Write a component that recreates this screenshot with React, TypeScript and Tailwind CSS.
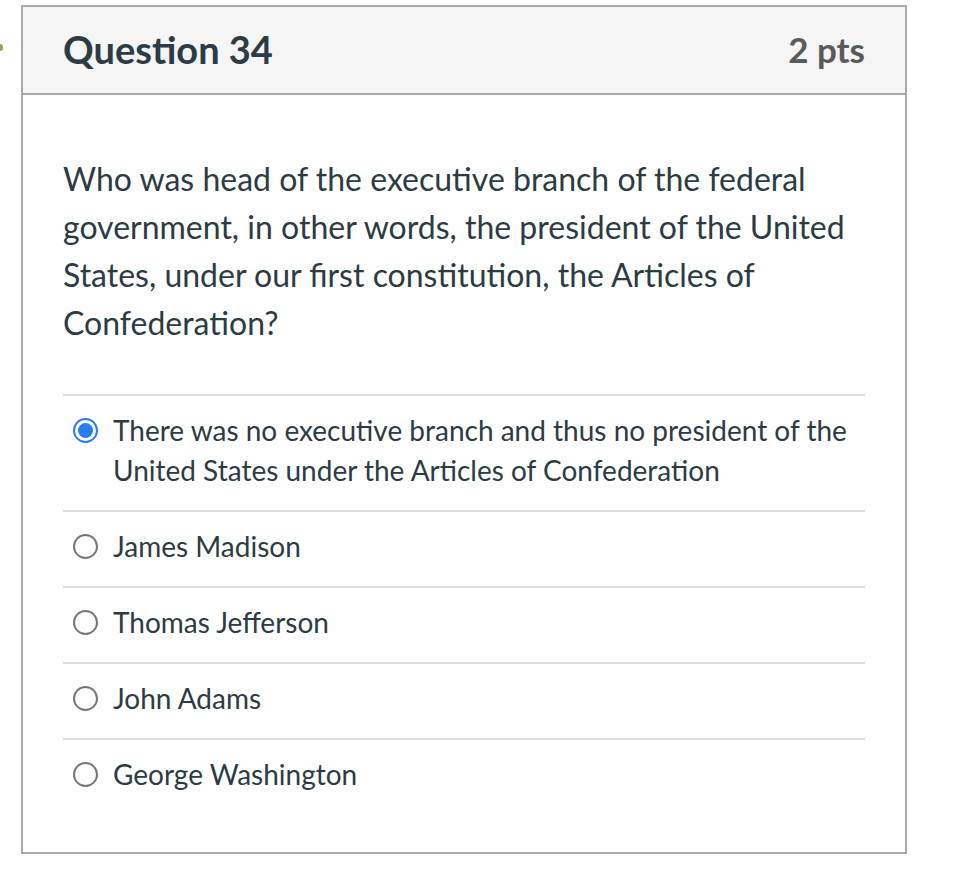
import React from "react";

const answers = [
  { text: "There was no executive branch and thus no president of the United States under the Articles of Confederation", selected: true },
  { text: "James Madison", selected: false },
  { text: "Thomas Jefferson", selected: false },
  { text: "John Adams", selected: false },
  { text: "George Washington", selected: false },
];

function Radio({ selected }: { selected: boolean }) {
  if (selected) {
    return (
      <span className="mt-[8px] flex h-[25px] w-[25px] shrink-0 items-center justify-center rounded-full border-[2px] border-[#2b7bf3] bg-white">
        <span className="h-[15px] w-[15px] rounded-full bg-[#2b7bf3]" />
      </span>
    );
  }
  return <span className="mt-[8px] h-[25px] w-[25px] shrink-0 rounded-full border-[2px] border-[#777777] bg-white" />;
}

export default function App() {
  return (
    <div className="relative min-h-[886px] w-[964px] bg-white" style={{ fontFamily: "Lato, 'Open Sans', sans-serif" }}>
      <span className="absolute left-[-3px] top-[44px] h-[7px] w-[6px] rounded-full bg-[#a89a5e]" />
      <div className="pl-[21px] pt-[5px]">
        <div className="w-[886px] border-[2px] border-[#aaaaaa]">
          <div className="flex h-[88px] items-center justify-between border-b-[2px] border-[#aaaaaa] bg-[#f5f5f5] px-[40px] pb-[2px]">
            <h2 className="text-[38px] font-bold leading-none text-[#2d3b45]">Question 34</h2>
            <span className="text-[35px] font-bold leading-none text-[#5a5a5a]">2 pts</span>
          </div>
          <div className="px-[40px] pb-[38px] pt-[60px]">
            <p className="text-[32px] leading-[48px] text-[#2d3b45]">
              Who was head of the executive branch of the federal government, in other words, the president of the United States, under our first constitution, the Articles of Confederation?
            </p>
            <div className="mt-[47px]">
              {answers.map((a, i) => (
                <div
                  key={i}
                  className={`flex items-start gap-[15px] pb-[20px] pl-[10px] pt-[14px] ${i === 0 ? "border-t-[2px] border-[#dddddd]" : "border-t-[2px] border-[#dddddd]"}`}
                >
                  <Radio selected={a.selected} />
                  <span className="text-[28px] leading-[40px] text-[#2d3b45]">{a.text}</span>
                </div>
              ))}
            </div>
          </div>
        </div>
      </div>
    </div>
  );
}
